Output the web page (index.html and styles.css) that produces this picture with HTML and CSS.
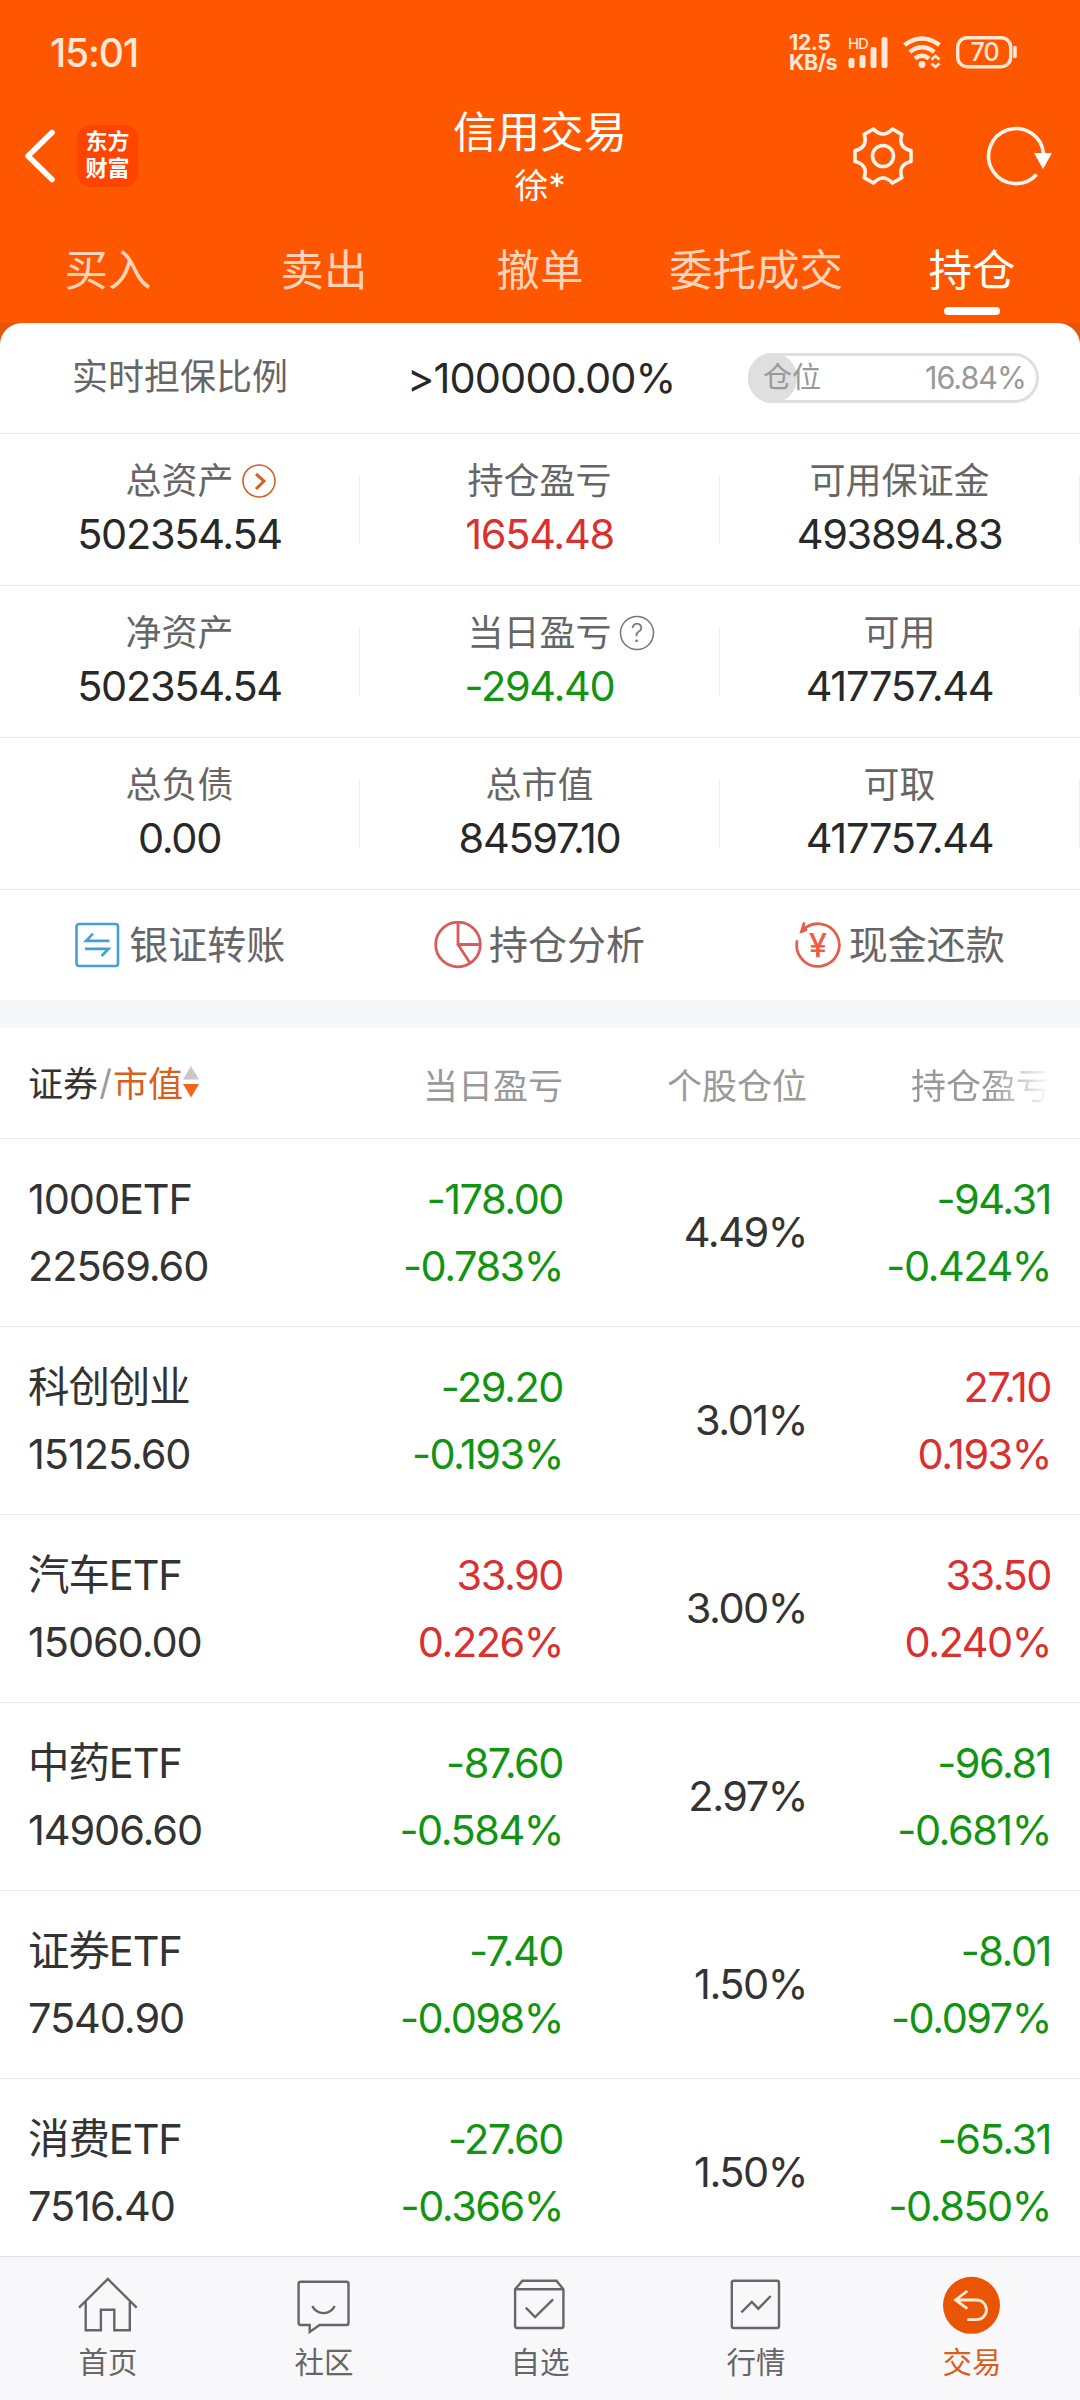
FILE: index.html
```html
<!DOCTYPE html>
<html lang="zh-CN">
<head>
  <meta charset="UTF-8">
  <meta name="viewport" content="width=device-width, initial-scale=1.0">
  <title>信用交易</title>
  <link rel="stylesheet" href="styles.css">
</head>
<body>
  <div class="app">
    <header class="header">
      <div class="status-bar">
        <span class="time">15:01</span>
        <div class="status-icons">
          <div class="speed"><span>12.5</span><span>KB/s</span></div>
          <div class="signal">
            <span class="hd">HD</span>
            <svg width="42" height="34" viewBox="0 0 42 34" fill="currentColor">
              <rect x="0.5" y="23" width="6" height="10" rx="2"/>
              <rect x="11.5" y="20" width="6" height="13" rx="2"/>
              <rect x="22.5" y="12" width="6" height="21" rx="2"/>
              <rect x="33.5" y="2" width="6" height="31" rx="2"/>
            </svg>
          </div>
          <svg class="wifi" width="40" height="34" viewBox="0 0 40 34" fill="none" stroke="currentColor" stroke-width="4.600">
            <path d="M1.500 10Q19 -3 36.500 10"/>
            <path d="M6.800 17Q19 7.500 31.200 17"/>
            <path d="M12 23.500Q19 18 26 23.500"/>
            <circle cx="19" cy="29.500" r="3.400" fill="currentColor" stroke="none"/>
            <path d="M28.500 24.500L32.500 21L36.500 24.500M28.500 28.500L32.500 32L36.500 28.500" stroke-width="2.800"/>
          </svg>
          <svg class="battery" width="62" height="34" viewBox="0 0 62 34" fill="none" stroke="currentColor">
            <rect x="2.700" y="2.700" width="53" height="29" rx="9.500" stroke-width="3.400"/>
            <path d="M60 12.500V21.500" stroke-width="3.500" stroke-linecap="round"/>
            <text x="29.500" y="26" text-anchor="middle" class="battery-text">70</text>
          </svg>
        </div>
      </div>

      <div class="title-bar">
        <div class="title-left">
          <svg width="36" height="60" viewBox="0 0 36 60" fill="none" stroke="#fff" stroke-width="5.500" stroke-linecap="round" stroke-linejoin="round">
            <path d="M32 6.500L8 30L32 53.500"/>
          </svg>
          <div class="logo">东方<br>财富</div>
        </div>
        <div class="title-center">
          <h1>信用交易</h1>
          <p>徐*</p>
        </div>
        <div class="title-right">
          <svg width="64" height="64" viewBox="-32 -32 64 64" fill="none" stroke="#fff4ea" stroke-width="3.600" stroke-linejoin="round">
            <path d="M-9.500 -27Q0 -17 9.500 -27L18.800 -21.600Q14.700 -8.500 28 -5.400V5.400Q14.700 8.500 18.800 21.600L9.500 27Q0 17 -9.500 27L-18.800 21.600Q-14.700 8.500 -28 5.400V-5.400Q-14.700 -8.500 -18.800 -21.600Z"/>
            <circle r="10.500"/>
          </svg>
          <svg width="70" height="64" viewBox="-32 -32 70 64" fill="none" stroke="#fff4ea" stroke-width="3.600">
            <path d="M20.500 18.500A27.500 27.500 0 1 1 27.500 -2"/>
            <path d="M18 -3H36L27 13Z" fill="#fff" stroke="none"/>
          </svg>
        </div>
      </div>

      <nav class="tabs">
        <a class="tab">买入</a>
        <a class="tab">卖出</a>
        <a class="tab">撤单</a>
        <a class="tab">委托成交</a>
        <a class="tab active">持仓</a>
      </nav>
    </header>

    <main class="content">
      <section class="card">
        <div class="ratio-row">
          <span class="label">实时担保比例</span>
          <span class="value">&gt;100000.00%</span>
          <div class="position-pill">
            <div class="pill-fill" style="width: 16.84%"></div>
            <span>仓位</span>
            <span class="pill-num">16.84%</span>
          </div>
        </div>

        <div class="summary-row">
          <div class="cell">
            <span class="label">总资产
              <svg class="label-icon" width="36" height="36" viewBox="0 0 36 36" fill="none" stroke="#d2622a">
                <circle cx="18" cy="18" r="16" stroke-width="1.600"/>
                <path d="M15 11L23 18L15 26" stroke-width="3"/>
              </svg>
            </span>
            <span class="value">502354.54</span>
          </div>
          <div class="cell">
            <span class="label">持仓盈亏</span>
            <span class="value up">1654.48</span>
          </div>
          <div class="cell">
            <span class="label">可用保证金</span>
            <span class="value">493894.83</span>
          </div>
        </div>
        <div class="summary-row">
          <div class="cell">
            <span class="label">净资产</span>
            <span class="value">502354.54</span>
          </div>
          <div class="cell">
            <span class="label">当日盈亏
              <svg class="label-icon" width="36" height="36" viewBox="0 0 36 36" fill="none" stroke="#777">
                <circle cx="18" cy="18" r="16.500" stroke-width="1.500"/>
                <text x="18" y="27" text-anchor="middle" class="help-text">?</text>
              </svg>
            </span>
            <span class="value down">-294.40</span>
          </div>
          <div class="cell">
            <span class="label">可用</span>
            <span class="value">417757.44</span>
          </div>
        </div>
        <div class="summary-row">
          <div class="cell">
            <span class="label">总负债</span>
            <span class="value">0.00</span>
          </div>
          <div class="cell">
            <span class="label">总市值</span>
            <span class="value">84597.10</span>
          </div>
          <div class="cell">
            <span class="label">可取</span>
            <span class="value">417757.44</span>
          </div>
        </div>

        <div class="actions">
          <a class="action">
            <svg width="48" height="48" viewBox="0 0 48 48" fill="none" stroke="#419fdc" stroke-width="2.600">
              <rect x="2.500" y="3" width="41.500" height="42" rx="2.500"/>
              <path d="M35.500 19.900H12L19 12.700M11 27.900H34.500L27.500 35"/>
            </svg>
            <span>银证转账</span>
          </a>
          <a class="action">
            <svg width="48" height="48" viewBox="0 0 48 48" fill="none" stroke="#dc5a5c" stroke-width="2.800">
              <circle cx="24" cy="23.500" r="22.300"/>
              <path d="M24 1.500V23.500H46M24 23.500L36 42"/>
            </svg>
            <span>持仓分析</span>
          </a>
          <a class="action">
            <svg width="48" height="48" viewBox="0 0 48 48" fill="none" stroke="#e2604b" stroke-width="2.800" stroke-linecap="round">
              <path d="M3 20.500A21.300 21.300 0 1 0 8 10"/>
              <path d="M10 2.500L7.500 10.500L12 9"/>
              <text x="24" y="35.500" text-anchor="middle" class="yuan">¥</text>
            </svg>
            <span>现金还款</span>
          </a>
        </div>
      </section>

      <section class="holdings">
        <div class="holdings-head">
          <div class="sort">
            <span class="sort-name">证券</span><span class="slash">/</span><span class="sort-active">市值</span>
            <svg width="16" height="32" viewBox="0 0 16 32">
              <path d="M8 0L16 13.500H0Z" fill="#c8c8c8"/>
              <path d="M0 18H16L8 31.500Z" fill="#f2651b"/>
            </svg>
          </div>
          <span>当日盈亏</span>
          <span>个股仓位</span>
          <span class="fade">持仓盈亏</span>
        </div>

        <div class="holding">
          <div class="name">1000ETF<br>22569.60</div>
          <div class="down">-178.00<br>-0.783%</div>
          <div>4.49%</div>
          <div class="down">-94.31<br>-0.424%</div>
        </div>
        <div class="holding">
          <div class="name">科创创业<br>15125.60</div>
          <div class="down">-29.20<br>-0.193%</div>
          <div>3.01%</div>
          <div class="up">27.10<br>0.193%</div>
        </div>
        <div class="holding">
          <div class="name">汽车ETF<br>15060.00</div>
          <div class="up">33.90<br>0.226%</div>
          <div>3.00%</div>
          <div class="up">33.50<br>0.240%</div>
        </div>
        <div class="holding">
          <div class="name">中药ETF<br>14906.60</div>
          <div class="down">-87.60<br>-0.584%</div>
          <div>2.97%</div>
          <div class="down">-96.81<br>-0.681%</div>
        </div>
        <div class="holding">
          <div class="name">证券ETF<br>7540.90</div>
          <div class="down">-7.40<br>-0.098%</div>
          <div>1.50%</div>
          <div class="down">-8.01<br>-0.097%</div>
        </div>
        <div class="holding">
          <div class="name">消费ETF<br>7516.40</div>
          <div class="down">-27.60<br>-0.366%</div>
          <div>1.50%</div>
          <div class="down">-65.31<br>-0.850%</div>
        </div>
      </section>
    </main>

    <nav class="bottom-nav">
      <a class="nav-item">
        <svg width="60" height="60" viewBox="0 0 60 60">
          <path d="M1 32.700L29.800 4L58.700 32.700M7.700 27V55.300H22.900V34.700H36.300V55.300H51.800V27"/>
        </svg>
        <span>首页</span>
      </a>
      <a class="nav-item">
        <svg width="60" height="60" viewBox="0 0 60 60">
          <path d="M6.600 6.700H52.500Q54.500 6.700 54.500 8.700V48Q54.500 50 52.500 50H25.600L15.700 57V50H6.600Q4.600 50 4.600 48V8.700Q4.600 6.700 6.600 6.700Z"/>
          <path d="M18.300 31C23 40.500 36 40.500 40.700 31"/>
        </svg>
        <span>社区</span>
      </a>
      <a class="nav-item">
        <svg width="60" height="60" viewBox="0 0 60 60">
          <path d="M12.400 5.700H46.500L53.400 14.300V51Q53.400 53 51.400 53H7.100Q5.100 53 5.100 51V14.300ZM5.100 14.300H53.400"/>
          <path d="M15.800 32.700L25.100 42L43.100 24.300"/>
        </svg>
        <span>自选</span>
      </a>
      <a class="nav-item">
        <svg width="60" height="60" viewBox="0 0 60 60">
          <rect x="5.800" y="5.700" width="47.200" height="47.300" rx="2"/>
          <path d="M15.400 37.300L25.800 27L32.300 33.700L44.700 21"/>
        </svg>
        <span>行情</span>
      </a>
      <a class="nav-item active">
        <svg width="60" height="60" viewBox="0 0 60 60">
          <circle cx="29.500" cy="30.300" r="28.500" fill="#ea5504" stroke="none"/>
          <path d="M25.300 16L13.500 25L25.300 33.700M13.500 25H34.600A9.800 9.800 0 0 1 34.600 44.700H25.300" stroke="#ffe9d8" stroke-width="2.800"/>
        </svg>
        <span>交易</span>
      </a>
    </nav>
  </div>
</body>
</html>
```
FILE: styles.css
```css
* {
  box-sizing: border-box;
}
body {
  margin: 0;
  background: #fff;
  font-family: Inter, "Noto Sans CJK SC", sans-serif;
  color: #333;
}
svg {
  display: block;
  flex-shrink: 0;
}
.app {
  width: 1080px;
  height: 2400px;
  display: flex;
  flex-direction: column;
  overflow: hidden;
}

/* header */
.header {
  background: #ff5700;
  height: 323px;
  flex-shrink: 0;
}
.status-bar {
  height: 104px;
  padding: 0 63px 0 50px;
  display: flex;
  align-items: center;
  justify-content: space-between;
  color: #ffe8d6;
}
.time {
  font-size: 39px;
  font-weight: 500;
  letter-spacing: -1.1px;
}
.status-icons {
  display: flex;
  align-items: center;
}
.speed {
  display: flex;
  flex-direction: column;
  width: 59px;
  font-size: 21.5px;
  line-height: 20px;
  font-weight: 700;
  letter-spacing: -0.5px;
}
.signal {
  position: relative;
  margin-right: 13px;
}
.wifi {
  margin-right: 12px;
}
.hd {
  position: absolute;
  left: 0;
  top: 0;
  font-size: 15px;
  line-height: 18px;
  font-weight: 500;
  letter-spacing: -1.2px;
}
.battery-text {
  font-size: 25px;
  font-weight: 500;
  letter-spacing: -1px;
  fill: currentColor;
  stroke: none;
}
.title-bar {
  height: 115px;
  padding: 0 26px 0 20px;
  display: grid;
  grid-template-columns: 1fr auto 1fr;
}
.title-left {
  display: flex;
  align-items: center;
  gap: 21px;
  height: 104px;
}
.logo {
  width: 61px;
  height: 62px;
  padding-top: 3px;
  border-radius: 14px;
  background: #ff4300;
  color: #fff;
  font-size: 22px;
  line-height: 27px;
  font-weight: 700;
  text-align: center;
}
.title-center {
  text-align: center;
  color: #fff;
  padding-left: 6px;
}
.title-center h1 {
  margin: 0;
  font-size: 43.5px;
  line-height: 56px;
  font-weight: 400;
}
.title-center p {
  margin: 0;
  font-size: 34px;
  line-height: 52px;
}
.title-right {
  display: flex;
  align-items: center;
  justify-content: flex-end;
  gap: 69px;
  height: 103px;
}
.tabs {
  display: grid;
  grid-template-columns: repeat(5, 1fr);
  height: 104px;
}
.tab {
  display: flex;
  flex-direction: column;
  align-items: center;
  font-size: 43.5px;
  line-height: 103px;
  color: #ffd4ba;
}
.tab.active {
  color: #fff;
}
.tab.active::after {
  content: "";
  width: 56px;
  height: 8px;
  margin-top: -15px;
  border-radius: 4px;
  background: #fff;
}

/* account summary */
.content {
  flex: 1;
  min-height: 0;
  overflow: hidden;
  background: #e4560c;
}
.card {
  background: #fff;
  border-radius: 22px 22px 0 0;
}
.label {
  position: relative;
  font-size: 36px;
  line-height: 53px;
  color: #666;
  white-space: nowrap;
}
.label-icon {
  position: absolute;
  left: calc(100% + 7px);
  top: 8px;
}
.value {
  font-size: 41.5px;
  line-height: 52px;
  letter-spacing: -1.3px;
  color: #282828;
}
.up {
  color: #d93030;
}
.down {
  color: #129412;
}
.ratio-row {
  height: 111px;
  padding: 0 41px 1px 72px;
  display: grid;
  grid-template-columns: 335px 1fr 291px;
  align-items: center;
  border-bottom: 1px solid #ececec;
}
.ratio-row .value {
  letter-spacing: -0.9px;
}
.position-pill {
  position: relative;
  height: 50px;
  padding: 0 10px 0 12px;
  display: flex;
  align-items: center;
  justify-content: space-between;
  border: 3px solid #dfdfdf;
  border-radius: 25px;
  font-size: 29px;
  line-height: 42px;
  color: #999;
}
.position-pill span {
  position: relative;
}
.pill-fill {
  position: absolute;
  left: -3px;
  top: -3px;
  height: 50px;
  min-width: 49px;
  border-radius: 25px;
  background: #dfdfdf;
}
.pill-num {
  font-size: 30.5px;
  letter-spacing: -1px;
}
.summary-row {
  height: 152px;
  display: grid;
  grid-template-columns: repeat(3, 1fr);
  border-bottom: 1px solid #ececec;
}
.cell {
  display: flex;
  flex-direction: column;
  align-items: center;
  padding: 21px 1px 0 0;
  background: linear-gradient(#ececec, #ececec) right 41px / 1px 69px no-repeat;
}
.cell .value {
  line-height: 53px;
}
.help-text {
  font-size: 25px;
  font-weight: 300;
  fill: #777;
  stroke: none;
}
.actions {
  height: 110px;
  padding-right: 1px;
  display: grid;
  grid-template-columns: repeat(3, 1fr);
}
.action {
  display: flex;
  align-items: center;
  justify-content: center;
  gap: 7px;
  font-size: 39px;
  line-height: 56px;
  color: #666;
}
.yuan {
  font-size: 33px;
  font-weight: 500;
  fill: #f25a44;
  stroke: none;
}

/* holdings table */
.holdings {
  border-top: 28px solid #f6f7fa;
  background: #fff;
}
.holdings-head,
.holding {
  display: grid;
  grid-template-columns: 291px 244px 244px 244px;
  align-items: center;
  padding: 0 29px 0 28px;
  border-bottom: 1px solid #ececec;
  text-align: right;
}
.holdings-head {
  height: 111px;
  font-size: 35px;
  color: #999;
}
.sort {
  display: flex;
  align-items: center;
  padding-bottom: 3px;
}
.sort-name {
  color: #333;
}
.slash {
  width: 15px;
  text-align: center;
}
.sort-active {
  color: #d95f1a;
}
.fade {
  -webkit-mask-image: linear-gradient(to right, #000 75%, transparent 100%);
  mask-image: linear-gradient(to right, #000 75%, transparent 100%);
}
.holding {
  height: 188px;
  font-size: 41.5px;
  line-height: 67px;
  letter-spacing: -1.5px;
}
.name {
  text-align: left;
  letter-spacing: -1.1px;
}

/* bottom nav */
.bottom-nav {
  height: 144px;
  flex-shrink: 0;
  padding-top: 18px;
  display: grid;
  grid-template-columns: repeat(5, 1fr);
  border-top: 1px solid #dfdfe3;
  background: #f8f8fb;
}
.nav-item {
  display: flex;
  flex-direction: column;
  align-items: center;
  font-size: 29.5px;
  line-height: 54px;
  color: #666;
}
.nav-item svg {
  fill: none;
  stroke: #666;
  stroke-width: 2.4;
}
.nav-item.active {
  color: #d95f1a;
}
```
